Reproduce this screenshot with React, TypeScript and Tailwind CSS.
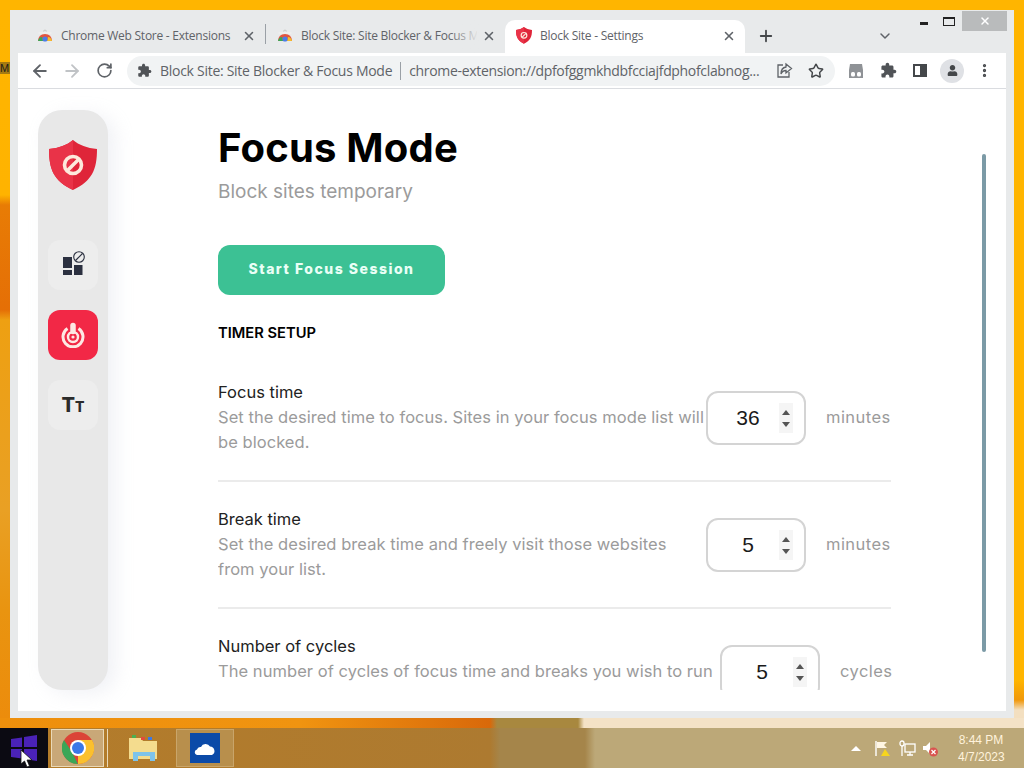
import type { ReactNode } from 'react';
import { ArrowLeft, ArrowRight, RotateCw, Plus, X, ChevronDown, Star, MoreVertical } from 'lucide-react';
import { FaUser } from 'react-icons/fa';

const bodyFont = { fontFamily: 'Inter, "Liberation Sans", sans-serif' };
const chromeFont = { fontFamily: '"Open Sans", sans-serif' };

function StoreIcon() {
  return (
    <svg width="16" height="16" viewBox="0 0 16 16">
      <path d="M6.5 3.5 Q8 0.5 9.5 3.5" fill="none" stroke="#c9c9c9" strokeWidth="1.2" />
      <rect x="1.5" y="4" width="13" height="2" fill="#eeeeee" />
      <path d="M1 13 Q1.5 6 8 6 Q14.5 6 15 13 Z" fill="#e2543e" />
      <path d="M1 13 Q2 9 5 9 L6 13 Z" fill="#3aa757" />
      <path d="M11 9 Q14 9 15 13 L10 13 Z" fill="#f6bd2c" />
      <circle cx="8" cy="11" r="2.6" fill="#4a7de8" />
    </svg>
  );
}

function ShieldIcon({ width }: { width: number }) {
  return (
    <svg width={width} height={(width * 50) / 48} viewBox="0 0 48 50">
      <path d="M24 0 C30 5 38 8 48 9 C48 30 43 41 24 50 C5 41 0 30 0 9 C10 8 18 5 24 0 Z" fill="#df2539" />
      <path d="M24 0 C18 5 10 8 0 9 C0 30 5 41 24 50 Z" fill="#e93348" />
      <circle cx="24" cy="25" r="8.5" fill="none" stroke="#fde9dc" strokeWidth="3.6" />
      <path d="M18 31 L30 19" stroke="#fde9dc" strokeWidth="3.6" />
    </svg>
  );
}

// chrome's extension glyph
function PuzzleIcon({ size }: { size: number }) {
  return (
    <svg width={size} height={size} viewBox="0 0 24 24" fill="#505357">
      <path d="M20.5 11H19V7c0-1.1-.9-2-2-2h-4V3.5C13 2.12 11.88 1 10.5 1S8 2.12 8 3.5V5H4c-1.1 0-1.99.9-1.99 2v3.8H3.5c1.49 0 2.7 1.21 2.7 2.7s-1.21 2.7-2.7 2.7H2V20c0 1.1.9 2 2 2h3.8v-1.5c0-1.49 1.21-2.7 2.7-2.7 1.49 0 2.7 1.21 2.7 2.7V22H17c1.1 0 2-.9 2-2v-4h1.5c1.38 0 2.5-1.12 2.5-2.5S21.88 11 20.5 11z" />
    </svg>
  );
}

function Tab({ title, active, icon, fade }: { title: string; active?: boolean; icon: ReactNode; fade?: boolean }) {
  return (
    <div className={`relative flex h-[33px] shrink-0 items-center pb-[2px] pl-[11px] pr-[9px] ${active ? 'w-[240px] rounded-t-[10px] bg-white' : 'w-[239px]'}`}>
      <div className="mr-[8px] flex h-[16px] w-[16px] shrink-0 items-center justify-center">{icon}</div>
      <span className="min-w-0 flex-1 overflow-hidden whitespace-nowrap text-[12px] tracking-[-0.25px] text-[#5f6368]" style={chromeFont}>
        {title}
      </span>
      {fade && <div className="absolute right-[26px] top-0 h-full w-[30px] bg-gradient-to-r from-transparent to-[#e8eaeb]" />}
      <X size={14} strokeWidth={2.6} className="ml-[5px] shrink-0 text-[#5f6368]" />
    </div>
  );
}

function BlockedSitesIcon() {
  return (
    <svg width="24" height="24" viewBox="0 0 24 24" className="overflow-visible">
      <rect x="2" y="4" width="9" height="11" fill="#2b3040" />
      <rect x="2" y="17" width="9" height="5" fill="#2b3040" />
      <rect x="13" y="12" width="8.5" height="10" fill="#2b3040" />
      <circle cx="18" cy="4" r="5.3" fill="#ededed" stroke="#2b3040" strokeWidth="1.1" />
      <path d="M14.5 7.5 L21.5 0.5" stroke="#2b3040" strokeWidth="1.1" />
    </svg>
  );
}

function FocusIcon() {
  return (
    <svg width="26" height="26" viewBox="0 0 26 26" fill="none" stroke="#fde8e4">
      <path d="M7.5 6.5 A10 10 0 1 0 18.5 6.5" strokeWidth="3" />
      <circle cx="13" cy="15" r="5" strokeWidth="2.4" />
      <circle cx="13" cy="15" r="1.6" fill="#fde8e4" stroke="none" />
      <path d="M13 3.5 V9.5" stroke="#f22846" strokeWidth="8" />
      <path d="M13 3.5 V9.5" strokeWidth="5.5" strokeLinecap="round" />
    </svg>
  );
}

function NumberBox({ value }: { value: number }) {
  return (
    <div className="mt-[11px] flex h-[54px] w-[100px] shrink-0 items-center rounded-[12px] border-2 border-[#d4d4d4] bg-white">
      <span className="ml-[27px] w-[26px] text-center text-[21px] text-[#1a1a1a]" style={{ fontFamily: '"Liberation Sans", sans-serif' }}>
        {value}
      </span>
      <div className="ml-[18px] flex h-[30px] w-[14px] flex-col items-center justify-center gap-[7px] bg-[#f5f5f5]">
        <div className="h-0 w-0 border-x-[4px] border-b-[5px] border-x-transparent border-b-[#555555]" />
        <div className="h-0 w-0 border-x-[4px] border-t-[5px] border-x-transparent border-t-[#555555]" />
      </div>
    </div>
  );
}

function SettingRow({ title, desc, value, unit, unitWidth, last }: { title: string; desc: string; value: number; unit: string; unitWidth: string; last?: boolean }) {
  return (
    <div className={`flex h-[127px] w-[673px] items-start pt-[25px] ${last ? '' : 'border-b-2 border-[#ebebeb]'}`}>
      <div className="min-w-0 flex-1">
        <div className="text-[16.5px] leading-[25px] text-[#222222]">{title}</div>
        <div className="text-[16.5px] leading-[25px] tracking-[0.05px] text-[#9b9b9b]">{desc}</div>
      </div>
      <NumberBox value={value} />
      <span className={`ml-[20px] mt-[25px] shrink-0 text-[16.5px] leading-[25px] tracking-[0.45px] text-[#9b9b9b] ${unitWidth}`}>{unit}</span>
    </div>
  );
}

function ToolIcon({ children }: { children: ReactNode }) {
  return <div className="flex h-[32px] w-[32px] shrink-0 items-center justify-center text-[#5f6368]">{children}</div>;
}

export default function App() {
  return (
    <div className="flex h-[768px] w-[1024px] flex-col overflow-hidden bg-[#ffb500]">
      <div className="h-[10px] shrink-0" />

      <div className="flex h-[708px] shrink-0">
        {/* wallpaper, left edge */}
        <div className="w-[10px] shrink-0 overflow-hidden bg-[linear-gradient(to_bottom,#ffb500_0,#ffb300_185px,#e87c05_195px,#e56f06_300px,#eea012_310px,#e9a024_500px,#e99410_600px,#ec8c0c_708px)] pt-[52px]">
          <div className="h-[12px] w-[10px] overflow-hidden bg-[#a57a12] text-[11px] leading-[12px] text-[#1c1c1c]" style={{ fontFamily: '"Liberation Sans", sans-serif' }}>
            M
          </div>
        </div>

        {/* browser window */}
        <div className="flex w-[1004px] shrink-0 flex-col bg-[#e8eaeb] pb-[7px] pl-[8px] pr-[8px]">
          {/* tab strip */}
          <div className="relative flex h-[43px] shrink-0 items-end pl-[8px]">
            <Tab title="Chrome Web Store - Extensions" icon={<StoreIcon />} />
            <div className="mb-[9px] h-[20px] w-px bg-[#9aa0a6]" />
            <Tab title="Block Site: Site Blocker & Focus Mode" icon={<StoreIcon />} fade />
            <Tab title="Block Site - Settings" icon={<ShieldIcon width={16} />} active />
            <Plus size={18} strokeWidth={2.4} className="mb-[8px] ml-[12px] text-[#44474a]" />
            <ChevronDown size={16} strokeWidth={2.2} className="mb-[9px] ml-[102px] text-[#5f6368]" />
            {/* window controls */}
            <div className="absolute right-[-1px] top-[1px] flex items-start">
              <div className="mr-[15px] mt-[11px] h-[3px] w-[8px] bg-[#222222]" />
              <div className="mr-[7px] mt-[6px] h-[9px] w-[12px] border border-t-2 border-[#222222]" />
              <div className="flex h-[20px] w-[45px] items-center justify-center bg-[#b9bbbc]">
                <X size={12} strokeWidth={3} className="text-white" />
              </div>
            </div>
          </div>

          {/* toolbar */}
          <div className="flex h-[36px] shrink-0 items-center border-b border-[#dadce0] bg-white pl-[6px]">
            <ToolIcon><ArrowLeft size={20} strokeWidth={2.2} /></ToolIcon>
            <ToolIcon><ArrowRight size={20} strokeWidth={2.2} className="text-[#c0c3c6]" /></ToolIcon>
            <ToolIcon><RotateCw size={17} strokeWidth={2.4} /></ToolIcon>
            <div className="ml-[7px] flex h-[30px] w-[708px] shrink-0 items-center rounded-full bg-[#f1f3f4] pl-[10px] pr-[3px] text-[14px] tracking-[-0.28px] text-[#5f6368]" style={chromeFont}>
              <div className="mr-[8px] shrink-0"><PuzzleIcon size={15} /></div>
              <span className="whitespace-nowrap">Block Site: Site Blocker &amp; Focus Mode</span>
              <div className="mx-[8px] h-[18px] w-px shrink-0 bg-[#9aa0a6]" />
              <span className="shrink-0 whitespace-nowrap tracking-[-0.33px]">chrome-extension://dpfofggmkhdbfcciajfdphofclabnog...</span>
              <div className="ml-auto flex shrink-0">
                <ToolIcon>
                  <svg width="17" height="17" viewBox="0 0 17 17" fill="none" stroke="#5f6368" strokeWidth="1.3">
                    <path d="M7 3 H2 V15 H13 V10" />
                    <path d="M10 2 L15.5 6.5 L10 11 V8.5 C7.5 8.5 6 9.5 5 12 C5 8 7 5.5 10 5 Z" />
                  </svg>
                </ToolIcon>
                <ToolIcon><Star size={16} strokeWidth={2.2} className="text-[#44474a]" /></ToolIcon>
              </div>
            </div>
            <div className="ml-[5px] flex">
              <ToolIcon>
                <svg width="16" height="16" viewBox="0 0 16 16">
                  <path d="M2 1 H14 L15 7 V15 H1 V7 Z" fill="#8f9296" />
                  <rect x="3" y="9" width="4" height="4.5" rx="1.5" fill="#fff" />
                  <rect x="9" y="9" width="4" height="4.5" rx="1.5" fill="#fff" />
                </svg>
              </ToolIcon>
              <ToolIcon><PuzzleIcon size={17} /></ToolIcon>
              <ToolIcon>
                <div className="flex h-[13px] w-[14px] justify-end border-2 border-[#44474a]"><div className="h-full w-[5px] bg-[#44474a]" /></div>
              </ToolIcon>
              <ToolIcon>
                <div className="flex h-[24px] w-[24px] items-center justify-center rounded-full bg-[#dfe1e5]">
                  <FaUser size={11} className="text-[#44474a]" />
                </div>
              </ToolIcon>
              <ToolIcon><MoreVertical size={17} strokeWidth={2.6} className="text-[#44474a]" /></ToolIcon>
            </div>
          </div>

          {/* page */}
          <div className="flex min-h-0 flex-1 bg-white" style={bodyFont}>
            {/* sidebar */}
            <div className="ml-[20px] mt-[21px] flex h-[580px] w-[70px] shrink-0 flex-col items-center rounded-[24px] bg-[#e8e8e8] pt-[30px] shadow-[8px_4px_18px_rgba(190,195,215,0.22)]">
              <ShieldIcon width={48} />
              <div className="mt-[50px] flex h-[50px] w-[50px] items-center justify-center rounded-[12px] bg-[#ededed]"><BlockedSitesIcon /></div>
              <div className="mt-[20px] flex h-[50px] w-[50px] items-center justify-center rounded-[12px] bg-[#f22846]"><FocusIcon /></div>
              <div className="mt-[20px] flex h-[50px] w-[50px] items-center justify-center rounded-[12px] bg-[#ededed]">
                <span className="text-[20px] font-extrabold leading-none text-[#2b2b2b]">T<span className="text-[14px]">T</span></span>
              </div>
            </div>

            {/* main column */}
            <div className="ml-[110px] h-[601px] min-w-0 flex-1 overflow-hidden">
              <h1 className="mt-[33px] text-[40px] font-bold leading-[52px] tracking-[0.2px] text-black">Focus Mode</h1>
              <p className="mt-[4px] text-[19px] leading-[27px] text-[#9b9b9b]">Block sites temporary</p>
              <button className="mt-[40px] block h-[50px] w-[227px] rounded-[12px] bg-[#3cc194] pb-[3px] text-[14px] font-extrabold tracking-[1.5px] text-[#eafff6]">
                Start Focus Session
              </button>
              <h2 className="mt-[27px] text-[14.7px] font-semibold leading-[22px] text-black">TIMER SETUP</h2>
              <div className="mt-[11px]">
                <SettingRow title="Focus time" desc="Set the desired time to focus. Sites in your focus mode list will be blocked." value={36} unit="minutes" unitWidth="w-[65px]" />
                <SettingRow title="Break time" desc="Set the desired break time and freely visit those websites from your list." value={5} unit="minutes" unitWidth="w-[65px]" />
                <SettingRow title="Number of cycles" desc="The number of cycles of focus time and breaks you wish to run" value={5} unit="cycles" unitWidth="w-[51px]" last />
              </div>
            </div>

            {/* scrollbar */}
            <div className="ml-[2px] mr-[20px] mt-[65px] h-[498px] w-[4px] shrink-0 rounded-full bg-[#7b9aa6]" />
          </div>
        </div>

        {/* wallpaper, right edge */}
        <div className="w-[10px] shrink-0 bg-[linear-gradient(to_bottom,#ffb500_0,#ffb500_670px,#f0980c_690px,#f3dfc0_700px)]" />
      </div>

      {/* wallpaper strip above the taskbar */}
      <div className="h-[10px] shrink-0 bg-[linear-gradient(to_right,#ee8f0c_0,#f09410_300px,#d9690a_490px,#a8883f_497px,#a8883f_578px,#f4e2c6_584px)]" />

      {/* taskbar */}
      <div className="flex h-[40px] shrink-0 items-center bg-[linear-gradient(to_right,#b47c2a_0,#ad7a30_490px,#a5854a_500px,#a5854a_585px,#bca878_595px)]">
        <div className="relative flex h-full w-[48px] items-center justify-center bg-[#0b0a12]">
          <svg width="28" height="26" viewBox="0 0 28 26">
            <path d="M1 4 L12 2.5 V12 H1 Z M14 2 L27 0 V12 H14 Z M1 14 H12 V23.5 L1 22 Z M14 14 H27 V26 L14 24 Z" fill="#4a22b8" />
          </svg>
          <svg width="13" height="19" viewBox="0 0 13 19" className="absolute left-[20px] top-[21px]">
            <path d="M1 1 L1 15 L4.5 12 L7 18 L9.5 17 L7 11 L12 11 Z" fill="#fff" stroke="#111" strokeWidth="0.8" />
          </svg>
        </div>
        <div className="ml-[3px] flex h-[38px] w-[53px] items-center justify-center border border-[#ead9b8] bg-[#c9a878]">
          <svg width="32" height="32" viewBox="0 0 32 32">
            <circle cx="16" cy="16" r="16" fill="#db4437" />
            <path d="M16 32 A16 16 0 0 0 30 8 H16 Z" fill="#fbc02d" />
            <path d="M16 32 A16 16 0 0 1 2 8 L10 20 L16 32 Z" fill="#3aa757" />
            <circle cx="16" cy="16" r="8" fill="#fff" />
            <circle cx="16" cy="16" r="6" fill="#3b78e7" />
          </svg>
        </div>
        <div className="flex h-[38px] w-[4px] border-r border-[#ead9b8]" />
        <div className="ml-[11px] flex h-[38px] w-[50px] items-center justify-center">
          <svg width="32" height="28" viewBox="0 0 32 28">
            <path d="M1 4 H13 L15 7 H29 V25 H1 Z" fill="#f4dc8e" />
            <rect x="4" y="1" width="4" height="3" fill="#4caf50" />
            <rect x="13" y="3" width="4" height="3" fill="#e24a3b" />
            <rect x="20" y="3" width="4" height="3" fill="#3b78e7" />
            <path d="M5 27 V18 H27 V27 H22 V22 H10 V27 Z" fill="#7ec3ea" />
          </svg>
        </div>
        <div className="ml-[7px] flex h-[38px] w-[58px] items-center justify-center border border-[#c9a56a] bg-[#b88f4c]">
          <div className="flex h-[30px] w-[30px] items-center justify-center bg-[#0b4aa8]">
            <svg width="22" height="16" viewBox="0 0 22 16" fill="#fff">
              <path d="M3 15 A2.8 2.8 0 0 1 3 9.5 A3.5 3.5 0 0 1 7 7 A5 5 0 0 1 16 6.5 A4.5 4.5 0 0 1 18 15 Z" />
            </svg>
          </div>
        </div>

        <div className="ml-auto flex items-center text-[#fff3dc]">
          <div className="mr-[13px] h-0 w-0 border-x-[5px] border-b-[5px] border-x-transparent border-b-white" />
          <svg width="17" height="17" viewBox="0 0 17 17" className="mr-[8px]">
            <path d="M2 1 V16" stroke="#fff" strokeWidth="1.4" />
            <path d="M3 2 H13 L10 5 L13 8 H3 Z" fill="#fff6e4" />
            <path d="M11 9 L16 16 H7 Z" fill="#f7d51d" />
          </svg>
          <svg width="17" height="17" viewBox="0 0 17 17" fill="none" stroke="#fff" strokeWidth="1.3" className="mr-[6px]">
            <rect x="6" y="4" width="10" height="8" />
            <path d="M8 15 H14 M11 12 V15" />
            <rect x="1" y="1" width="4" height="5" rx="2" />
            <path d="M3 6 V16" />
          </svg>
          <svg width="17" height="17" viewBox="0 0 17 17" className="mr-[19px]">
            <path d="M1 6 H4 L8 2 V14 L4 10 H1 Z" fill="#fff" />
            <circle cx="11.5" cy="12" r="4.5" fill="#d9534f" />
            <path d="M9.5 10 L13.5 14 M13.5 10 L9.5 14" stroke="#fff" strokeWidth="1.2" />
          </svg>
          <div className="mr-[20px] mt-[2px] w-[46px] text-center text-[12px] leading-[17px]" style={{ fontFamily: '"Liberation Sans", sans-serif' }}>
            <div className="whitespace-nowrap">8:44 PM</div>
            <div className="whitespace-nowrap">4/7/2023</div>
          </div>
        </div>
      </div>
    </div>
  );
}
